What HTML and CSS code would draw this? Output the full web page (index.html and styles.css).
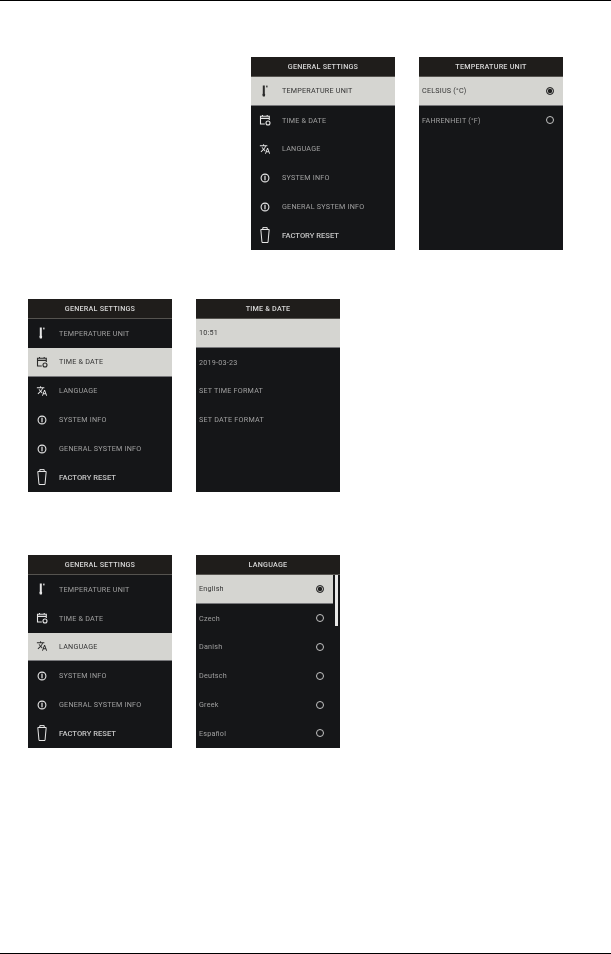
FILE: index.html
```html
<!DOCTYPE HTML>
<html lang="en">
  <head>
    <meta charset="utf-8">
    <title>General settings</title>
    <link rel="stylesheet" href="styles.css">
  </head>
  <body>
    <svg class="defs" aria-hidden="true">
      <symbol id="i-temp" viewBox="0 0 14 14">
        <path d="M4.800 1.400h2v8.200l.4 1.100-.4 1.900h-1.900l-.6-1.900.5-1.100z" fill="currentColor"/>
        <rect x="8.200" y="1.600" width="1.300" height="1.800" fill="currentColor"/>
      </symbol>
      <symbol id="i-date" viewBox="0 0 14 14">
        <path d="M6.800 11H2.500V3.200h8.800v3.800M2.500 5.400h8.800M4.500 2V3.800M9.200 2V3.800" fill="none" stroke="currentColor" stroke-width="1.100"/>
        <circle cx="10" cy="10" r="2" fill="none" stroke="currentColor" stroke-width="1.100"/>
      </symbol>
      <symbol id="i-lang" viewBox="-3 -3 30 30">
        <path d="M12.870 15.070l-2.540-2.510.03-.03c1.740-1.940 2.980-4.170 3.710-6.530H17V4h-7V2H8v2H1v1.990h11.170C11.500 7.920 10.440 9.750 9 11.350 8.070 10.320 7.300 9.190 6.690 8h-2c.73 1.630 1.730 3.170 2.980 4.560l-5.090 5.020L4 19l5-5 3.110 3.110.76-2.040zM18.500 10h-2L12 22h2l1.120-3h4.750L21 22h2l-4.500-12zm-2.620 7l1.620-4.330L19.120 17h-3.240z" fill="currentColor"/>
      </symbol>
      <symbol id="i-info" viewBox="0 0 14 14">
        <circle cx="7" cy="7" r="3.900" fill="none" stroke="currentColor" stroke-width="1.100"/>
        <rect x="6.400" y="4.700" width="1.200" height="4.600" fill="currentColor"/>
      </symbol>
      <symbol id="i-reset" viewBox="0 0 14 18">
        <path d="M2.800 3.500h8.400L10 16.500H4zM4.800 3.200V1.600h4.400v1.600" fill="none" stroke="currentColor" stroke-width="1"/>
      </symbol>
    </svg>

    <div class="rule"></div>

    <section class="shots shots-right">
      <div class="screen">
        <h2 class="title">GENERAL SETTINGS</h2>
        <ul class="menu">
          <li class="row active"><svg class="icon"><use href="#i-temp"/></svg>TEMPERATURE UNIT</li>
          <li class="row"><svg class="icon"><use href="#i-date"/></svg>TIME &amp; DATE</li>
          <li class="row"><svg class="icon"><use href="#i-lang"/></svg>LANGUAGE</li>
          <li class="row"><svg class="icon"><use href="#i-info"/></svg>SYSTEM INFO</li>
          <li class="row"><svg class="icon"><use href="#i-info"/></svg>GENERAL SYSTEM INFO</li>
          <li class="row strong"><svg class="icon icon-tall"><use href="#i-reset"/></svg>FACTORY RESET</li>
        </ul>
      </div>
      <div class="screen">
        <h2 class="title">TEMPERATURE UNIT</h2>
        <ul class="list">
          <li class="row active">CELSIUS (°C)<span class="radio on"></span></li>
          <li class="row">FAHRENHEIT (°F)<span class="radio"></span></li>
        </ul>
      </div>
    </section>

    <section class="shots shots-time">
      <div class="screen">
        <h2 class="title">GENERAL SETTINGS</h2>
        <ul class="menu">
          <li class="row"><svg class="icon"><use href="#i-temp"/></svg>TEMPERATURE UNIT</li>
          <li class="row active"><svg class="icon"><use href="#i-date"/></svg>TIME &amp; DATE</li>
          <li class="row"><svg class="icon"><use href="#i-lang"/></svg>LANGUAGE</li>
          <li class="row"><svg class="icon"><use href="#i-info"/></svg>SYSTEM INFO</li>
          <li class="row"><svg class="icon"><use href="#i-info"/></svg>GENERAL SYSTEM INFO</li>
          <li class="row strong"><svg class="icon icon-tall"><use href="#i-reset"/></svg>FACTORY RESET</li>
        </ul>
      </div>
      <div class="screen">
        <h2 class="title">TIME &amp; DATE</h2>
        <ul class="list">
          <li class="row active">10:51</li>
          <li class="row">2019-03-23</li>
          <li class="row">SET TIME FORMAT</li>
          <li class="row">SET DATE FORMAT</li>
        </ul>
      </div>
    </section>

    <section class="shots shots-lang">
      <div class="screen">
        <h2 class="title">GENERAL SETTINGS</h2>
        <ul class="menu">
          <li class="row"><svg class="icon"><use href="#i-temp"/></svg>TEMPERATURE UNIT</li>
          <li class="row"><svg class="icon"><use href="#i-date"/></svg>TIME &amp; DATE</li>
          <li class="row active"><svg class="icon"><use href="#i-lang"/></svg>LANGUAGE</li>
          <li class="row"><svg class="icon"><use href="#i-info"/></svg>SYSTEM INFO</li>
          <li class="row"><svg class="icon"><use href="#i-info"/></svg>GENERAL SYSTEM INFO</li>
          <li class="row strong"><svg class="icon icon-tall"><use href="#i-reset"/></svg>FACTORY RESET</li>
        </ul>
      </div>
      <div class="screen">
        <h2 class="title">LANGUAGE</h2>
        <div class="scroller">
          <ul class="list">
            <li class="row active">English<span class="radio on"></span></li>
            <li class="row">Czech<span class="radio"></span></li>
            <li class="row">Danish<span class="radio"></span></li>
            <li class="row">Deutsch<span class="radio"></span></li>
            <li class="row">Greek<span class="radio"></span></li>
            <li class="row">Español<span class="radio"></span></li>
          </ul>
          <div class="scrollbar"></div>
        </div>
      </div>
    </section>

    <div class="rule rule-bottom"></div>
  </body>
</html>
```

FILE: styles.css
```css
* {
  margin: 0;
  padding: 0;
  box-sizing: border-box; }

html, body {
  height: 954px;
  overflow: hidden; }

body {
  background: white;
  display: flex;
  flex-direction: column;
  font-family: Roboto, "Liberation Sans", sans-serif; }

.defs {
  display: none; }

.rule {
  height: 1px;
  background: black;
  flex: none; }

.rule-bottom {
  margin-top: auto; }

.shots {
  display: flex;
  gap: 24px;
  flex: none; }

.shots-right {
  margin: 56px 0 0 251px; }

.shots-time {
  margin: 49px 0 0 28px; }

.shots-lang {
  margin: 63px 0 0 28px; }

.screen {
  width: 144px;
  height: 193px;
  background: #151618;
  color: #a0a0a0;
  font-size: 7.2px;
  letter-spacing: 0.22px;
  display: flex;
  flex-direction: column;
  filter: blur(0.4px); }

.title {
  height: 20px;
  flex: none;
  background: #1f1d1b;
  border-bottom: 1px solid #55534f;
  color: #d6d6d6;
  font-size: 7.2px;
  font-weight: 500;
  line-height: 20px;
  text-align: center; }

.menu, .list {
  list-style: none; }

.list {
  flex: 1; }

.row {
  height: 28.8px;
  display: flex;
  align-items: center;
  padding-left: 3px; }

.menu .row {
  padding-left: 0; }

.row.active {
  background: #d5d5d1;
  color: #333;
  border-bottom: 1px solid #77777a; }

.strong {
  color: #c4c4c4;
  font-size: 7.6px;
  font-weight: 500;
  letter-spacing: 0; }

.icon {
  width: 14px;
  height: 14px;
  margin: 0 10px 0 7px;
  color: #e6e6e6;
  flex: none; }

.icon-tall {
  height: 18px; }

.row.active .icon {
  color: #2a2a2a; }

.radio {
  width: 8px;
  height: 8px;
  margin-left: auto;
  margin-right: 9.5px;
  border: 0.8px solid #c4c4c4;
  border-radius: 50%; }

.radio.on {
  border-color: #333;
  background: #222;
  box-shadow: inset 0 0 0 0.8px #d5d5d1; }

.scroller {
  display: flex;
  flex: 1; }

.scrollbar {
  width: 3px;
  height: 51px;
  margin: 0 2px;
  background: #e8e8e8;
  flex: none; }
```
